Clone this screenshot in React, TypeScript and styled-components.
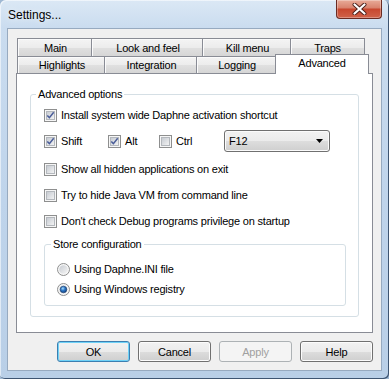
import React from 'react';
import styled, { createGlobalStyle } from 'styled-components';

const GlobalStyle = createGlobalStyle`
  html, body {
    margin: 0;
    padding: 0;
    width: 389px;
    height: 379px;
    overflow: hidden;
    background: #9fb8d3;
  }
  * {
    box-sizing: border-box;
  }
`;

const Frame = styled.div`
  width: 389px;
  height: 379px;
  display: flex;
  flex-direction: column;
  background: linear-gradient(180deg, #dbe8f5 0px, #cadcef 28px, #bfd4eb 200px, #b9cfe7 100%);
  border-radius: 6px 6px 5px 5px;
  box-shadow: inset -1px -1px 0 #3e5572, inset 1px 1px 0 rgba(255, 255, 255, 0.55);
  font-family: 'Liberation Sans', Arial, sans-serif;
  font-size: 11px;
  letter-spacing: -0.2px;
  color: #000;
`;

const TitleBar = styled.div`
  height: 28px;
  display: flex;
  align-items: flex-start;
  padding-left: 8px;
`;

const Title = styled.div`
  margin-top: 7px;
  line-height: 16px;
  font-size: 12px;
  letter-spacing: 0;
  text-shadow: 0 0 6px rgba(255, 255, 255, 0.9);
`;

const CloseButton = styled.div`
  margin-left: auto;
  margin-right: 7px;
  width: 46px;
  height: 19px;
  display: flex;
  align-items: center;
  justify-content: center;
  border: 1px solid #6a2b22;
  border-top: none;
  border-radius: 0 0 4px 4px;
  background: linear-gradient(180deg, #e8ab98 0%, #d9846f 42%, #c8482f 52%, #d0634a 100%);
  box-shadow: inset 0 0 0 1px rgba(255, 255, 255, 0.3);
`;

const Client = styled.div`
  margin: 0 7px;
  height: 343px;
  display: flex;
  flex-direction: column;
  background: #f0f0f0;
  border: 1px solid #97aac0;
  padding: 9px 8px 8px;
`;

const TabStrip = styled.div<{ $h: number }>`
  display: flex;
  align-items: flex-start;
  height: ${({ $h }) => $h}px;
  padding-left: 1px;
`;

const Tab = styled.div<{ $w: number; $active?: boolean }>`
  position: relative;
  width: ${({ $w }) => $w}px;
  height: ${({ $active }) => ($active ? 'calc(100% + 3px)' : '100%')};
  margin-top: ${({ $active }) => ($active ? '-2px' : '0')};
  display: flex;
  align-items: center;
  justify-content: center;
  padding-bottom: ${({ $active }) => ($active ? '3px' : '0')};
  border: 1px solid #898c95;
  border-bottom: none;
  background: ${({ $active }) => ($active
    ? '#ffffff'
    : 'linear-gradient(180deg, #f4f4f4 0%, #ececec 50%, #e0e0e0 51%, #d6d6d6 100%)')};
  box-shadow: ${({ $active }) => ($active ? 'none' : 'inset 1px 1px 0 #fbfbfb')};
  z-index: ${({ $active }) => ($active ? 2 : 0)};

  & + & {
    margin-left: ${({ $active }) => ($active ? '-3px' : '-1px')};
  }
`;

const Page = styled.div`
  height: 260px;
  display: flex;
  flex-direction: column;
  background: #ffffff;
  border: 1px solid #898c95;
`;

const Group = styled.fieldset<{ $pad: string; $margin: string }>`
  margin: ${({ $margin }) => $margin};
  padding: ${({ $pad }) => $pad};
  border: 1px solid #d5dfe5;
  border-radius: 3px;
  display: flex;
  flex-direction: column;
  min-inline-size: 0;
`;

const Legend = styled.legend<{ $shift: number }>`
  padding: 0 2px;
  margin-left: ${({ $shift }) => $shift}px;
  line-height: 13px;
`;

const Row = styled.div<{ $mt: number; $h?: number }>`
  display: flex;
  align-items: center;
  margin-top: ${({ $mt }) => $mt}px;
  height: ${({ $h }) => $h || 14}px;
`;

const Choice = styled.label<{ $w?: number }>`
  display: flex;
  align-items: center;
  gap: 4px;
  width: ${({ $w }) => ($w ? `${$w}px` : 'auto')};
  line-height: 13px;
  white-space: nowrap;
`;

const Combo = styled.div`
  width: 106px;
  height: 22px;
  display: flex;
  align-items: center;
  justify-content: space-between;
  padding: 0 6px 0 4px;
  border: 1px solid #707070;
  border-radius: 3px;
  background: linear-gradient(180deg, #f2f2f2 0%, #ebebeb 50%, #dddddd 51%, #cfcfcf 100%);
  box-shadow: inset 0 0 0 1px #fbfbfb;
`;

const ButtonRow = styled.div`
  margin-top: 8px;
  display: flex;
  justify-content: flex-end;
  gap: 8px;
`;

const Button = styled.div<{ $default?: boolean; $disabled?: boolean }>`
  width: 73px;
  height: 21px;
  display: flex;
  align-items: center;
  justify-content: center;
  border-radius: 3px;
  border: 1px solid ${({ $default, $disabled }) => ($disabled ? '#adb2b5' : $default ? '#3c7fb1' : '#707070')};
  color: ${({ $disabled }) => ($disabled ? '#a0a0a0' : '#000')};
  background: ${({ $disabled }) => ($disabled
    ? '#f4f4f4'
    : 'linear-gradient(180deg, #f2f2f2 0%, #ebebeb 50%, #dddddd 51%, #cfcfcf 100%)')};
  box-shadow: ${({ $default, $disabled }) => ($disabled
    ? 'none'
    : $default ? 'inset 0 0 0 1px #6fd2f7' : 'inset 0 0 0 1px #fcfcfc')};
`;

const CheckBox = ({ checked }: { checked?: boolean }): JSX.Element => (
  <svg width="13" height="13" viewBox="0 0 13 13">
    <defs>
      <linearGradient id="cbFill" x1="0" y1="0" x2="1" y2="1">
        <stop offset="0" stopColor="#c4c9d0" />
        <stop offset="1" stopColor="#f5f5f5" />
      </linearGradient>
    </defs>
    <rect x="0.5" y="0.5" width="12" height="12" fill="#f6f6f6" stroke="#8e8f8f" />
    <rect x="2.5" y="2.5" width="8" height="8" fill="url(#cbFill)" stroke="#b4b8bd" />
    {checked && (
      <path d="M3.3 6.4 L5.4 8.6 L9.7 3.2" fill="none" stroke="#4a5d99" strokeWidth="1.5" />
    )}
  </svg>
);

const Radio = ({ checked }: { checked?: boolean }): JSX.Element => (
  <svg width="13" height="13" viewBox="0 0 13 13">
    <defs>
      <linearGradient id="rbFill" x1="0" y1="0" x2="1" y2="1">
        <stop offset="0" stopColor="#c8ccd2" />
        <stop offset="1" stopColor="#f5f5f5" />
      </linearGradient>
      <radialGradient id="rbDot" cx="0.4" cy="0.35" r="0.7">
        <stop offset="0" stopColor="#a9defc" />
        <stop offset="0.45" stopColor="#2d77c7" />
        <stop offset="1" stopColor="#0d3d7c" />
      </radialGradient>
    </defs>
    <circle cx="6.5" cy="6.5" r="6" fill="#f6f6f6" stroke="#8e8f8f" />
    <circle cx="6.5" cy="6.5" r="4.3" fill="url(#rbFill)" />
    {checked && <circle cx="6.5" cy="6.5" r="3.3" fill="url(#rbDot)" stroke="#1b3c6b" strokeWidth="0.6" />}
  </svg>
);

const topTabs = [
  { title: 'Main', w: 77 },
  { title: 'Look and feel', w: 114 },
  { title: 'Kill menu', w: 91 },
  { title: 'Traps', w: 75 },
];

const frontTabs = [
  { title: 'Highlights', w: 90 },
  { title: 'Integration', w: 95 },
  { title: 'Logging', w: 82 },
  { title: 'Advanced', w: 94, active: true },
];

const App = (): JSX.Element => (
  <>
    <GlobalStyle />
    <Frame>
      <TitleBar>
        <Title>Settings...</Title>
        <CloseButton>
          <svg width="15" height="12" viewBox="0 0 15 12">
            <path d="M2.5 1.5 L12.5 10.5 M12.5 1.5 L2.5 10.5" stroke="#4a1f19" strokeWidth="4" strokeLinecap="round" />
            <path d="M2.5 1.5 L12.5 10.5 M12.5 1.5 L2.5 10.5" stroke="#ffffff" strokeWidth="2.2" strokeLinecap="round" />
          </svg>
        </CloseButton>
      </TitleBar>
      <Client>
        <TabStrip $h={18}>
          {topTabs.map((t) => (
            <Tab key={t.title} $w={t.w}>{t.title}</Tab>
          ))}
        </TabStrip>
        <TabStrip $h={17}>
          {frontTabs.map((t) => (
            <Tab key={t.title} $w={t.w} $active={t.active}>{t.title}</Tab>
          ))}
        </TabStrip>
        <Page>
          <Group $margin="14px 13px 0" $pad="7px 12px 10px 13px">
            <Legend $shift={-8}>Advanced options</Legend>
            <Row $mt={0}>
              <Choice><CheckBox checked />Install system wide Daphne activation shortcut</Choice>
            </Row>
            <Row $mt={8} $h={22}>
              <Choice $w={64}><CheckBox checked />Shift</Choice>
              <Choice $w={51}><CheckBox checked />Alt</Choice>
              <Choice $w={65}><CheckBox />Ctrl</Choice>
              <Combo>
                <span>F12</span>
                <svg width="7" height="4" viewBox="0 0 7 4">
                  <polygon points="0,0 7,0 3.5,4" fill="#000" />
                </svg>
              </Combo>
            </Row>
            <Row $mt={10}>
              <Choice><CheckBox />Show all hidden applications on exit</Choice>
            </Row>
            <Row $mt={12}>
              <Choice><CheckBox />Try to hide Java VM from command line</Choice>
            </Row>
            <Row $mt={12}>
              <Choice><CheckBox />Don't check Debug programs privilege on startup</Choice>
            </Row>
            <Group $margin="10px 0 0" $pad="11px 12px 9px 12px">
              <Legend $shift={-6}>Store configuration</Legend>
              <Row $mt={0}>
                <Choice><Radio />Using Daphne.INI file</Choice>
              </Row>
              <Row $mt={6}>
                <Choice><Radio checked />Using Windows registry</Choice>
              </Row>
            </Group>
          </Group>
        </Page>
        <ButtonRow>
          <Button $default>OK</Button>
          <Button>Cancel</Button>
          <Button $disabled>Apply</Button>
          <Button>Help</Button>
        </ButtonRow>
      </Client>
    </Frame>
  </>
);

export default App;
